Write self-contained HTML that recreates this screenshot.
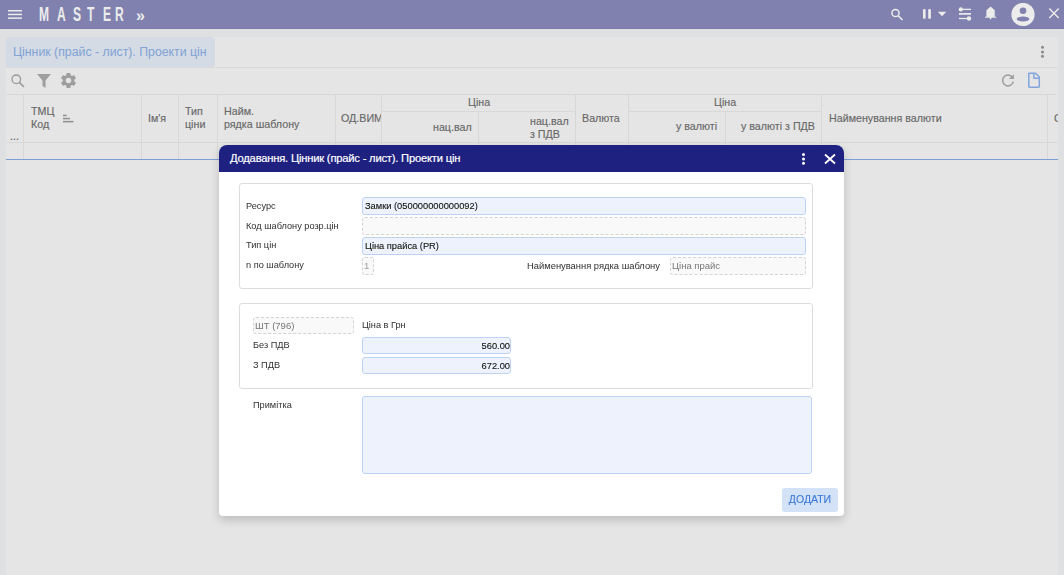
<!DOCTYPE html>
<html><head><meta charset="utf-8">
<style>
*{box-sizing:border-box;margin:0;padding:0}
html,body{width:1064px;height:575px;overflow:hidden}
body{position:relative;background:#dfe0e2;font-family:"Liberation Sans",sans-serif;color:#6b6b6b}
.a{position:absolute;white-space:nowrap}
#hdr{left:0;top:0;width:1064px;height:29px;background:#8081ae;border-bottom:1px solid #7a7ba8}
.ml{position:absolute;top:3.5px;font-size:19.5px;font-weight:bold;color:#ececec;transform:scaleX(0.62);transform-origin:0 0;line-height:20px}
#panel{left:6px;top:37px;width:1052px;height:560px;background:#e5e5e5;border-radius:4px 4px 0 0}
#tab{left:6px;top:37px;width:209px;height:30px;background:#d4dbe5;border-radius:4px 4px 3px 0;color:#80a2d4;font-size:12.3px;line-height:30px;padding-left:7px}
.hl{position:absolute;height:1px;background:#d8d8d8}
.vl{position:absolute;width:1px;background:#d8d8d8}
.th{position:absolute;font-size:10.7px;line-height:13.5px;color:#686868;white-space:nowrap;margin-top:0.8px;-webkit-text-stroke:0.15px #686868}
#modal{left:219px;top:145px;width:625px;height:371px;background:#fff;border-radius:8px 8px 4px 4px;box-shadow:0 4px 10px rgba(0,0,0,0.18)}
#mh{left:0;top:0;width:625px;height:27px;background:#1e2180;border-radius:8px 8px 0 0}
#mt{left:11px;top:6.3px;font-size:11.2px;color:#fff;letter-spacing:-0.2px;-webkit-text-stroke:0.2px #fff;line-height:14px}
.sec{position:absolute;border:1px solid #dcdcdc;border-radius:3px}
.lb{position:absolute;font-size:9.2px;color:#303030;white-space:nowrap;line-height:11px}
.inp{position:absolute;background:#edf2fc;border:1px solid #bcd3f2;border-radius:3px;font-size:9.3px;color:#111;-webkit-text-stroke:0.1px #111;line-height:16px;padding-left:2px;white-space:nowrap}
.dsh{position:absolute;background:#f9f9f9;border:1px dashed #d3d3d3;border-radius:3px;font-size:9.5px;color:#777;line-height:16.5px;padding-left:1px;white-space:nowrap}
</style></head><body>
<div id="hdr" class="a">
  <svg class="a" style="left:8px;top:10px" width="14" height="9" viewBox="0 0 14 9"><rect x="0" y="0" width="14" height="1.5" fill="#ececec"/><rect x="0" y="3.7" width="14" height="1.5" fill="#ececec"/><rect x="0" y="7.4" width="14" height="1.5" fill="#ececec"/></svg>
  <span class="ml" style="left:39px">M</span>
  <span class="ml" style="left:56.5px">A</span>
  <span class="ml" style="left:72.5px">S</span>
  <span class="ml" style="left:87px">T</span>
  <span class="ml" style="left:102.5px">E</span>
  <span class="ml" style="left:114.5px">R</span>
  <span class="a" style="left:136px;top:7px;font-size:16px;font-weight:bold;color:#ececec;line-height:18px">»</span>
  <!-- search -->
  <svg class="a" style="left:888px;top:6px" width="18" height="18" viewBox="0 0 18 18"><circle cx="7.5" cy="7" r="3.6" fill="none" stroke="#ececec" stroke-width="1.5"/><line x1="10.2" y1="9.7" x2="14.5" y2="14" stroke="#ececec" stroke-width="1.6"/></svg>
  <!-- pause + dropdown -->
  <svg class="a" style="left:920px;top:6px" width="30" height="16" viewBox="0 0 30 16"><rect x="3" y="3.2" width="2.6" height="9.4" fill="#ececec"/><rect x="8.2" y="3.2" width="2.7" height="9.4" fill="#ececec"/><path d="M17.8 5.8 L26.3 5.8 L22.05 10.3 Z" fill="#ececec"/></svg>
  <!-- sliders -->
  <svg class="a" style="left:956px;top:4px" width="18" height="18" viewBox="0 0 18 18"><line x1="4" y1="5.4" x2="15" y2="5.4" stroke="#ececec" stroke-width="1.3"/><circle cx="4.8" cy="5.4" r="2.1" fill="#ececec"/><line x1="3" y1="9.9" x2="15" y2="9.9" stroke="#ececec" stroke-width="1.7"/><line x1="3" y1="14.5" x2="14" y2="14.5" stroke="#ececec" stroke-width="1.3"/><circle cx="13" cy="14.5" r="2.2" fill="#ececec"/></svg>
  <!-- bell -->
  <svg class="a" style="left:984px;top:6px" width="14" height="15" viewBox="0 0 14 15"><path d="M6.6 0.8 L10.6 4.2 L10.6 10.2 L12.4 11.4 L0.9 11.4 L2.6 10.2 L2.6 4.2 Z" fill="#ececec" stroke="#ececec" stroke-width="0.4" stroke-linejoin="round"/><path d="M5 11.2 L8.2 11.2 L6.6 13.8 Z" fill="#ececec"/></svg>
  <!-- avatar -->
  <svg class="a" style="left:1011px;top:3px" width="24" height="24" viewBox="0 0 24 24"><circle cx="12" cy="11.5" r="11.6" fill="#ececec"/><circle cx="12" cy="7.8" r="3.3" fill="#8081ae"/><ellipse cx="12" cy="16" rx="6.3" ry="2.6" fill="#8081ae"/></svg>
  <!-- close -->
  <svg class="a" style="left:1047px;top:6px" width="14" height="14" viewBox="0 0 14 14"><path d="M2.3 2.6 L11.7 12.1 M11.7 2.6 L2.3 12.1" stroke="#ececec" stroke-width="1.4"/></svg>
</div>

<div id="panel" class="a"></div>
<div id="tab" class="a">Цінник (прайс - лист). Проекти цін</div>
<div class="hl" style="left:6px;top:67px;width:1052px;background:#d9d9d9"></div>
<!-- kebab -->
<svg class="a" style="left:1039px;top:44px" width="7" height="15" viewBox="0 0 7 15"><circle cx="3.5" cy="3.3" r="1.5" fill="#8a8a8a"/><circle cx="3.5" cy="8" r="1.5" fill="#8a8a8a"/><circle cx="3.5" cy="12.3" r="1.5" fill="#8a8a8a"/></svg>

<!-- toolbar icons -->
<svg class="a" style="left:10px;top:73px" width="16" height="16" viewBox="0 0 16 16"><circle cx="6.3" cy="6.3" r="4.3" fill="none" stroke="#9a9a9a" stroke-width="1.3"/><line x1="9.4" y1="9.4" x2="14" y2="14" stroke="#9a9a9a" stroke-width="1.5"/></svg>
<svg class="a" style="left:37px;top:74px" width="14" height="14" viewBox="0 0 14 14"><path d="M0 0 L14 0 L8.5 6.5 L8.5 14 L5.5 12 L5.5 6.5 Z" fill="#9e9e9e"/></svg>
<svg class="a" style="left:59px;top:71px" width="19" height="19" viewBox="0 0 24 24"><path fill="#9e9e9e" d="M19.14 12.94c.04-.3.06-.61.06-.94 0-.32-.02-.64-.07-.94l2.03-1.58c.18-.14.23-.41.12-.61l-1.92-3.32c-.12-.22-.37-.29-.59-.22l-2.39.96c-.5-.38-1.03-.7-1.62-.94l-.36-2.54c-.04-.24-.24-.41-.48-.41h-3.84c-.24 0-.43.17-.47.41l-.36 2.54c-.59.24-1.13.57-1.62.94l-2.39-.96c-.22-.08-.47 0-.59.22L2.74 8.87c-.12.21-.08.47.12.61l2.03 1.58c-.05.3-.09.63-.09.94s.02.64.07.94l-2.03 1.58c-.18.14-.23.41-.12.61l1.92 3.32c.12.22.37.29.59.22l2.39-.96c.5.38 1.03.7 1.62.94l.36 2.54c.05.24.24.41.48.41h3.84c.24 0 .44-.17.47-.41l.36-2.54c.59-.24 1.13-.56 1.62-.94l2.39.96c.22.08.47 0 .59-.22l1.92-3.32c.12-.22.07-.47-.12-.61l-2.01-1.58zM12 15.6c-1.98 0-3.6-1.62-3.6-3.6s1.62-3.6 3.6-3.6 3.6 1.62 3.6 3.6-1.62 3.6-3.6 3.6z"/></svg>
<!-- refresh -->
<svg class="a" style="left:1000px;top:72px" width="16" height="16" viewBox="0 0 16 16"><path d="M13 6.4 A5.4 5.4 0 1 0 13.3 9.6" fill="none" stroke="#9e9e9e" stroke-width="1.5"/><path d="M13.9 2.2 L13.9 7 L9.1 7 Z" fill="#9e9e9e"/></svg>
<!-- doc -->
<svg class="a" style="left:1027px;top:72px" width="14" height="16" viewBox="0 0 14 16"><path d="M1.8 1.3 L8.6 1.3 L12.3 5.1 L12.3 14.5 Q12.3 15.2 11.6 15.2 L2.5 15.2 Q1.8 15.2 1.8 14.5 Z M6.9 1.3 L6.9 6.3 L12.3 6.3" fill="none" stroke="#82a6dc" stroke-width="1.5" stroke-linejoin="round"/></svg>

<!-- table grid -->
<div class="hl" style="left:6px;top:94px;width:1050px"></div>
<div class="hl" style="left:6px;top:142px;width:1052px"></div>
<div class="hl" style="left:382px;top:111px;width:193px"></div>
<div class="hl" style="left:629px;top:111px;width:193px"></div>
<div class="vl" style="left:23px;top:95px;height:64px"></div>
<div class="vl" style="left:141px;top:95px;height:64px"></div>
<div class="vl" style="left:178px;top:95px;height:64px"></div>
<div class="vl" style="left:217px;top:95px;height:64px"></div>
<div class="vl" style="left:335px;top:95px;height:64px"></div>
<div class="vl" style="left:381px;top:95px;height:64px"></div>
<div class="vl" style="left:478px;top:112px;height:47px"></div>
<div class="vl" style="left:575px;top:95px;height:64px"></div>
<div class="vl" style="left:628px;top:95px;height:64px"></div>
<div class="vl" style="left:725px;top:112px;height:47px"></div>
<div class="vl" style="left:821px;top:95px;height:64px"></div>
<div class="vl" style="left:1047px;top:95px;height:64px"></div>
<div class="hl" style="left:6px;top:159px;width:1052px;background:#7c9fd4"></div>

<span class="th" style="left:10px;top:129px">...</span>
<span class="th" style="left:31px;top:104px">ТМЦ<br>Код</span>
<svg class="a" style="left:62.5px;top:114px" width="11" height="9" viewBox="0 0 11 9"><rect x="0" y="0.7" width="3.6" height="1.5" fill="#8e8e8e"/><rect x="0" y="3.8" width="7" height="1.5" fill="#8e8e8e"/><rect x="0" y="6.9" width="10.4" height="1.5" fill="#8e8e8e"/></svg>
<span class="th" style="left:148px;top:111px">Ім'я</span>
<span class="th" style="left:185px;top:104px">Тип<br>ціни</span>
<span class="th" style="left:224px;top:104px">Найм.<br>рядка шаблону</span>
<div class="a" style="left:338px;top:95px;width:43px;height:47px;overflow:hidden"><span class="th" style="left:3px;top:16px">ОД.ВИМ</span></div>
<span class="th" style="left:468px;top:95px">Ціна</span>
<span class="th" style="left:433px;top:120px">нац.вал</span>
<span class="th" style="left:530px;top:114px">нац.вал<br>з ПДВ</span>
<span class="th" style="left:582px;top:111px">Валюта</span>
<span class="th" style="left:714px;top:95px">Ціна</span>
<span class="th" style="left:676px;top:119px">у валюті</span>
<span class="th" style="left:741px;top:119px">у валюті з ПДВ</span>
<span class="th" style="left:829px;top:111px">Найменування валюти</span>
<div class="a" style="left:1048px;top:95px;width:10px;height:47px;overflow:hidden"><span class="th" style="left:6px;top:16px">С</span></div>

<!-- modal -->
<div id="modal" class="a">
  <div id="mh" class="a">
    <span id="mt" class="a">Додавання. Цінник (прайс - лист). Проекти цін</span>
    <svg class="a" style="left:581px;top:7px" width="7" height="14" viewBox="0 0 7 14"><circle cx="3.5" cy="2.4" r="1.5" fill="#fff"/><circle cx="3.5" cy="6.9" r="1.5" fill="#fff"/><circle cx="3.5" cy="11.3" r="1.5" fill="#fff"/></svg>
    <svg class="a" style="left:604px;top:7px" width="14" height="14" viewBox="0 0 14 14"><path d="M2 2.5 L12 11.5 M12 2.5 L2 11.5" stroke="#fff" stroke-width="1.8"/></svg>
  </div>
  <div class="a" style="left:0;top:0;width:625px;height:371px;will-change:transform">
  <div class="sec" style="left:20px;top:38px;width:574px;height:106px"></div>
  <span class="lb" style="left:27px;top:56px">Ресурс</span>
  <div class="inp" style="left:143px;top:52px;width:444px;height:18px;line-height:17.5px">Замки (050000000000092)</div>
  <span class="lb" style="left:27px;top:76px">Код шаблону розр.цін</span>
  <div class="dsh" style="left:143px;top:72px;width:444px;height:18px"></div>
  <span class="lb" style="left:27px;top:95px">Тип цін</span>
  <div class="inp" style="left:143px;top:92px;width:444px;height:18px">Ціна прайса (PR)</div>
  <span class="lb" style="left:27px;top:115px">n по шаблону</span>
  <div class="dsh" style="left:143px;top:112px;width:12px;height:18px;color:#a0a0a0">1</div>
  <span class="lb" style="left:308px;top:115px;font-size:9.4px">Найменування рядка шаблону</span>
  <div class="dsh" style="left:451px;top:112px;width:136px;height:18px">Ціна прайс</div>

  <div class="sec" style="left:20px;top:158px;width:574px;height:86px"></div>
  <div class="dsh" style="left:34px;top:172px;width:101px;height:17px">ШТ (796)</div>
  <span class="lb" style="left:143px;top:175px">Ціна в Грн</span>
  <span class="lb" style="left:34px;top:195px">Без ПДВ</span>
  <div class="inp" style="left:143px;top:192px;width:149px;height:17px;text-align:right;padding:0">560.00</div>
  <span class="lb" style="left:34px;top:215px">З ПДВ</span>
  <div class="inp" style="left:143px;top:212px;width:149px;height:17px;text-align:right;padding:0">672.00</div>

  <span class="lb" style="left:34px;top:255px">Примітка</span>
  <div class="inp" style="left:143px;top:251px;width:450px;height:78px"></div>

  <div class="a" style="left:563px;top:343px;width:56px;height:24px;background:#d3e2f6;border-radius:3px;color:#3a78d8;font-size:10.5px;line-height:23px;-webkit-text-stroke:0.1px #3a78d8;text-align:center">ДОДАТИ</div>
  </div>
</div>
</body></html>
